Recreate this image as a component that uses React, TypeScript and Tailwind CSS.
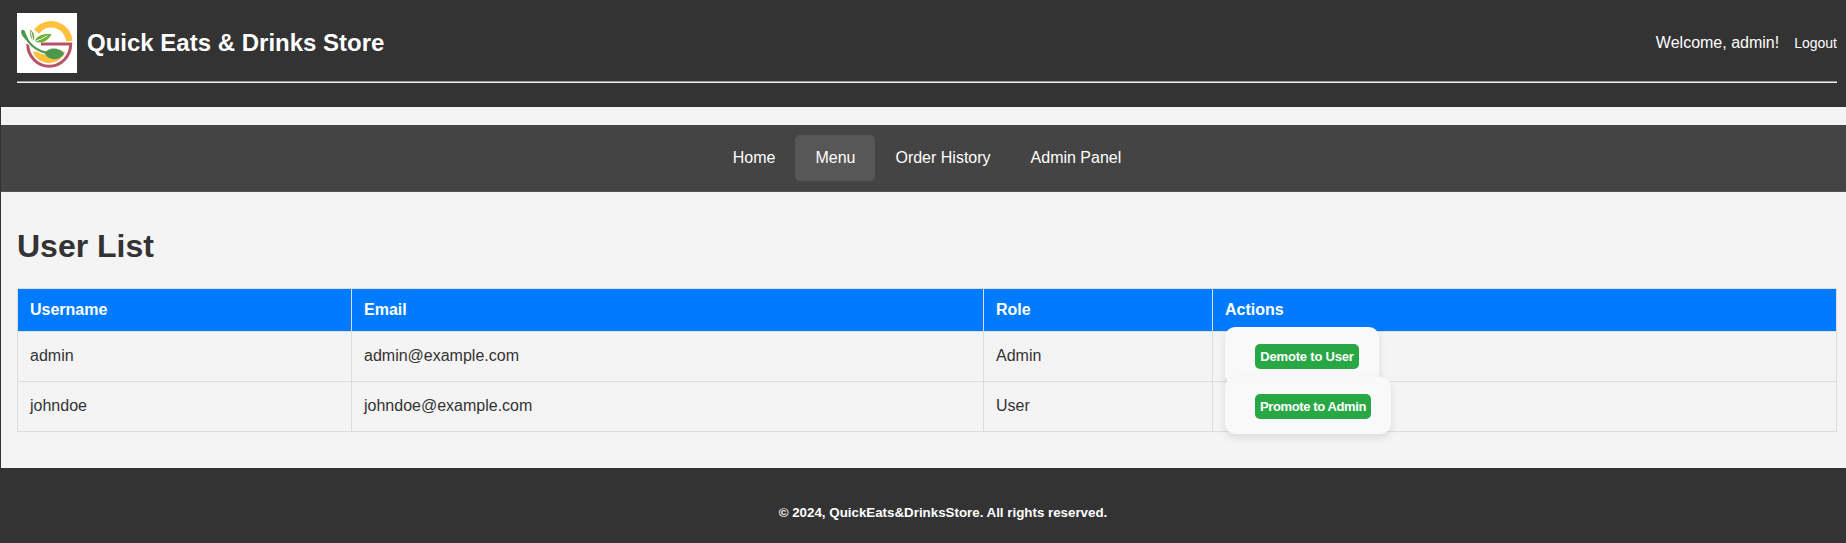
const users = [
  {
    username: 'admin',
    email: 'admin@example.com',
    role: 'Admin',
    action: 'Demote to User',
    buttonClass: 'w-[104px] tracking-[-0.2px]',
  },
  {
    username: 'johndoe',
    email: 'johndoe@example.com',
    role: 'User',
    action: 'Promote to Admin',
    buttonClass: 'w-[116px] tracking-[-0.38px]',
  },
];

const navItems = [
  { label: 'Home', active: false },
  { label: 'Menu', active: true },
  { label: 'Order History', active: false },
  { label: 'Admin Panel', active: false },
];

function Logo() {
  return (
    <svg viewBox="0 0 60 60" className="size-[60px] shrink-0 bg-white">
      <path d="M17 16.500A21.500 21.500 0 0 1 55.500 28H49A15 15 0 0 0 22 20.500Z" fill="#ffc13d" />
      <path d="M15.700 38.700H48.300A17.250 17.250 0 0 1 15.700 38.700Z" fill="#ffc13d" />
      <path d="M24 31H53.700A21.500 22.200 0 0 1 10.700 31" fill="none" stroke="#b75367" strokeWidth="3" />
      <path d="M8 23C12 31 18 37.500 30 40.500" fill="none" stroke="white" strokeWidth="4" />
      <path d="M7 21C11 30 17 37 30 40" fill="none" stroke="#4f974e" strokeWidth="2" />
      <path d="M4.200 18.500C4.300 16.300 7 16.200 8 18.500C9 21.500 10.500 24 12 28C9 28 3.500 22 4.200 18.500Z" fill="#4f974e" />
      <path d="M27.500 40C31 34 42.500 33.500 47.200 40.500C43 48.500 31 48 27.500 40Z" fill="#4f974e" />
      <path d="M13.500 16.500C17 19.500 18.500 24 16.200 27.700C13 25 12.500 20 13.500 16.500Z" fill="#6bb036" />
      <path d="M17.500 28.500C20 22 26 20.500 34.500 21C31.500 28 24 31.500 17.500 28.500Z" fill="#6bb036" />
      <path d="M14 18.500L16 27.500M17.500 28.500Q24 26.500 30.500 22.700" fill="none" stroke="white" strokeWidth="0.9" />
    </svg>
  );
}

export default function App() {
  return (
    <div className="flex h-[543px] flex-col border-l border-[#333] bg-[#f4f4f4] font-['Liberation_Sans',sans-serif] text-base text-[#333]">
      <header className="h-[107px] bg-[#333] pt-[13px] pr-[9px] pl-4 text-white">
        <div className="flex h-[60px] items-center">
          <Logo />
          <span className="ml-[10px] text-2xl font-bold">Quick Eats &amp; Drinks Store</span>
          <span className="ml-auto">Welcome, admin!</span>
          <a className="ml-[15px] text-sm">Logout</a>
        </div>
        <div className="mt-2 h-[2px] border-t border-b border-t-[#9a9a9a] border-b-[#eee]" />
      </header>

      <nav className="mt-[18px] flex h-[67px] justify-center border-b border-[#555] bg-[#444] pt-[10px] pl-[7px] text-white">
        {navItems.map((item) => (
          <a
            key={item.label}
            className={
              item.active
                ? 'flex h-[46px] items-center rounded-[5px] bg-[#575757] px-5 pb-px'
                : 'flex h-[46px] items-center rounded-[5px] px-5 pb-px'
            }
          >
            {item.label}
          </a>
        ))}
      </nav>

      <main className="flex-1 pr-[9px] pl-4">
        <h1 className="mt-[36px] mb-[24px] text-[32px] leading-9 font-bold">User List</h1>
        <div className="grid grid-cols-[334px_632px_229px_1fr] grid-rows-[43px_50px_50px] border-t border-l border-[#ddd]">
          {['Username', 'Email', 'Role', 'Actions'].map((name) => (
            <div
              key={name}
              className="flex items-center border-r border-b border-[#ddd] bg-[#007bff] px-3 pb-px font-bold text-white"
            >
              {name}
            </div>
          ))}
          {users.map((user) => (
            <div key={user.username} className="col-span-4 grid grid-cols-subgrid grid-rows-[50px]">
              <div className="flex items-center border-r border-b border-[#ddd] px-3 pb-px">{user.username}</div>
              <div className="flex items-center border-r border-b border-[#ddd] px-3 pb-px">{user.email}</div>
              <div className="flex items-center border-r border-b border-[#ddd] px-3 pb-px">{user.role}</div>
              <div className="border-r border-b border-[#ddd] pl-3">
                <div className="-mt-[5px] flex h-[57px] w-fit rounded-[10px] bg-[#f9f9f9] pt-[17px] pr-5 pl-[30px] shadow-[0_4px_8px_rgba(0,0,0,0.1)]">
                  <button
                    className={`h-[25px] rounded-[5px] bg-[#28a745] text-[13px] leading-[25px] font-bold whitespace-nowrap text-white ${user.buttonClass}`}
                  >
                    {user.action}
                  </button>
                </div>
              </div>
            </div>
          ))}
        </div>
      </main>

      <footer className="h-[75px] bg-[#333] pt-[37px] pl-[39px] text-center text-[13.333px] leading-4 font-bold text-white">
        © 2024, QuickEats&amp;DrinksStore. All rights reserved.
      </footer>
    </div>
  );
}
